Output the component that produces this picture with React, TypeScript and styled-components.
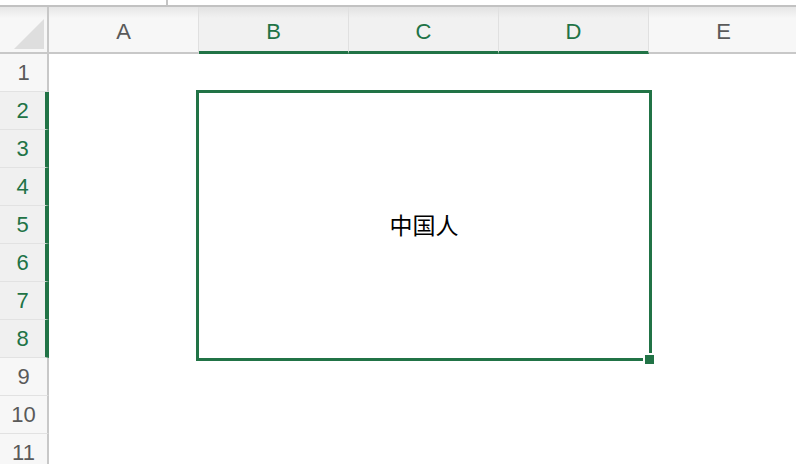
import styled, { createGlobalStyle } from 'styled-components';

const GREEN = '#217346';

const columns = ['A', 'B', 'C', 'D', 'E'];
const rows = Array.from({ length: 11 }, (_, i) => i + 1);
const selectedColumns = ['B', 'C', 'D'];

const isRowSelected = (row: number) => row >= 2 && row <= 8;

const GlobalStyle = createGlobalStyle`
  html, body {
    margin: 0;
    padding: 0;
    background: #ffffff;
    overflow: hidden;
  }

  body {
    font-family: 'Liberation Sans', Arial, 'Noto Sans CJK SC', sans-serif;
  }
`;

export default function App(): JSX.Element {
  return (
    <>
      <GlobalStyle />
      <Page>
        <FormulaStrip>
          <StripTick />
        </FormulaStrip>
        <Sheet>
          <Corner>
            <CornerTriangle />
          </Corner>
          {columns.map((col) => (
            <ColumnHeader key={col} $selected={selectedColumns.includes(col)}>
              {col}
            </ColumnHeader>
          ))}
          {rows.map((row) => (
            <Row key={row}>
              <RowHeader $selected={isRowSelected(row)}>{row}</RowHeader>
              {columns.map((col) => (
                <Cell key={col} />
              ))}
            </Row>
          ))}
          <Selection>
            <MergedText>中国人</MergedText>
            <FillHandle />
          </Selection>
        </Sheet>
      </Page>
    </>
  );
}

const Page = styled.div`
  width: 796px;
  height: 464px;
  overflow: hidden;
  display: flex;
  flex-direction: column;
`;

const FormulaStrip = styled.div`
  position: relative;
  height: 5px;
  flex-shrink: 0;
  background: #ffffff;
  border-bottom: 2px solid #c2c2c2;
`;

const StripTick = styled.span`
  position: absolute;
  left: 166px;
  top: 0;
  width: 2px;
  height: 5px;
  background: #c4c4c4;
`;

const Sheet = styled.div`
  position: relative;
  display: grid;
  grid-template-columns: 49px repeat(5, 150px);
  grid-template-rows: 47px;
  grid-auto-rows: 38px;
`;

const Corner = styled.div`
  position: relative;
  box-sizing: border-box;
  background: linear-gradient(#e6e6e6, #f7f7f7 25%);
  border-right: 2px solid #c8c8c8;
  border-bottom: 2px solid #c8c8c8;
`;

const CornerTriangle = styled.div`
  position: absolute;
  right: 3px;
  bottom: 3px;
  width: 30px;
  height: 30px;
  background: #dedede;
  clip-path: polygon(100% 0, 100% 100%, 0 100%);
`;

const ColumnHeader = styled.div<{ $selected: boolean }>`
  box-sizing: border-box;
  display: flex;
  align-items: center;
  justify-content: center;
  padding-top: 5px;
  font-size: 22px;
  color: ${({ $selected }) => ($selected ? GREEN : '#5a5a5a')};
  background: ${({ $selected }) =>
    $selected
      ? 'linear-gradient(#e2e2e2, #f1f1f1 25%)'
      : 'linear-gradient(#e6e6e6, #f7f7f7 25%)'};
  border-right: 1px solid #e0e0e0;
  border-bottom: ${({ $selected }) =>
    $selected ? `3px solid ${GREEN}` : '2px solid #c8c8c8'};

  &:last-child {
    border-right: none;
  }
`;

const Row = styled.div`
  display: contents;
`;

const RowHeader = styled.div<{ $selected: boolean }>`
  box-sizing: border-box;
  display: flex;
  align-items: center;
  justify-content: center;
  font-size: 22px;
  color: ${({ $selected }) => ($selected ? GREEN : '#5a5a5a')};
  background: ${({ $selected }) => ($selected ? '#f0f0f0' : '#f7f7f7')};
  border-bottom: 1px solid #e2e2e2;
  border-right: ${({ $selected }) =>
    $selected ? `4px solid ${GREEN}` : '2px solid #c8c8c8'};
`;

const Cell = styled.div`
  background: #ffffff;
`;

const Selection = styled.div`
  position: absolute;
  left: 196px;
  top: 83px;
  width: 456px;
  height: 271px;
  box-sizing: border-box;
  border: 3px solid ${GREEN};
  display: flex;
  align-items: center;
  justify-content: center;
`;

const MergedText = styled.span`
  font-family: 'Noto Sans CJK SC', 'Liberation Sans', sans-serif;
  font-size: 23px;
  line-height: 1;
  color: #000000;
  margin-top: -3px;
`;

const FillHandle = styled.span`
  position: absolute;
  right: -7px;
  bottom: -8px;
  width: 9px;
  height: 9px;
  background: ${GREEN};
  border: 2px solid #ffffff;
`;
